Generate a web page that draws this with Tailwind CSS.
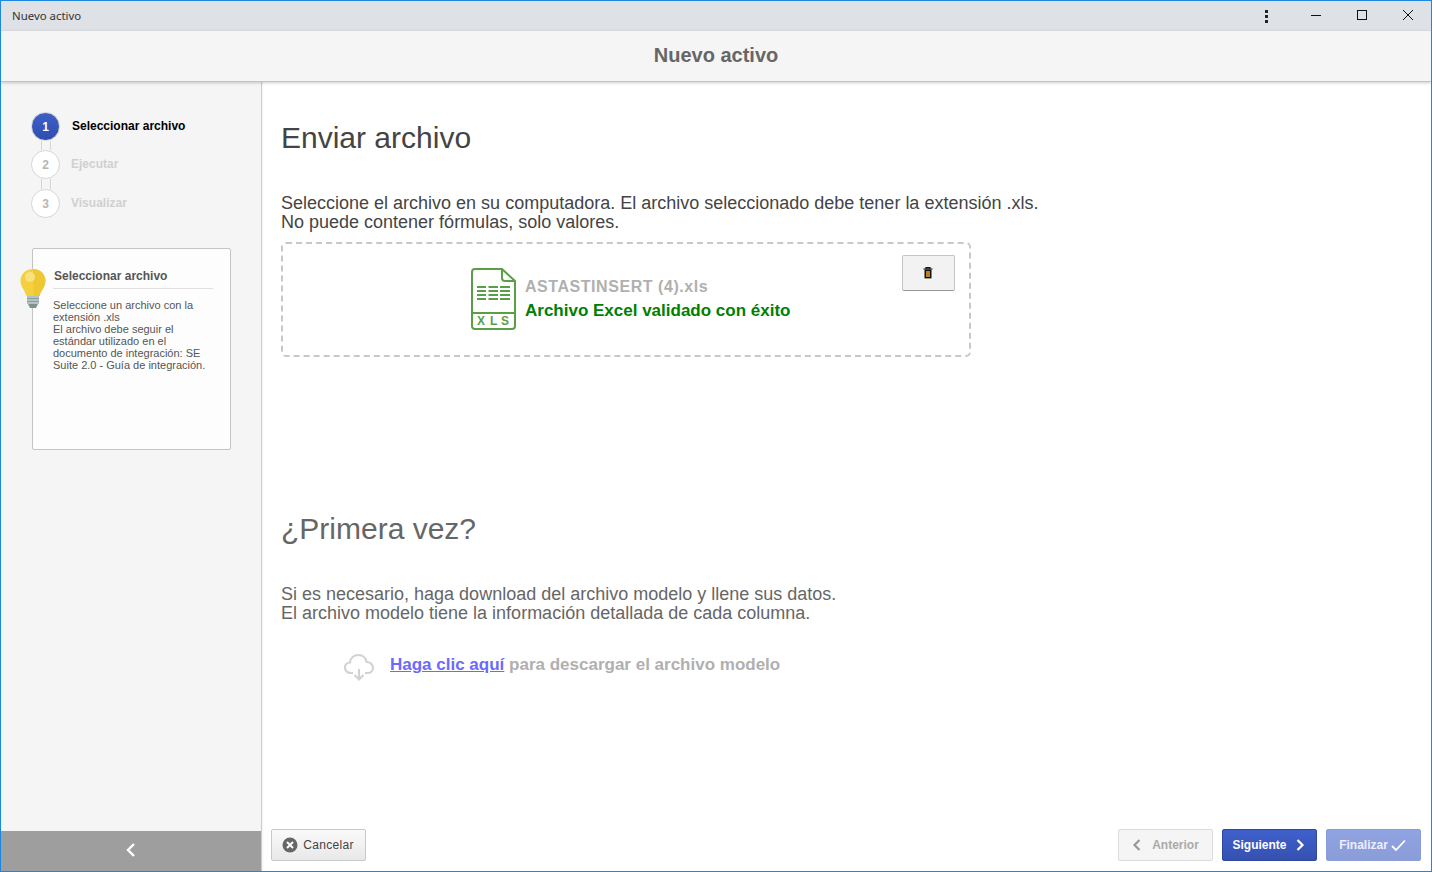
<!DOCTYPE html>
<html>
<head>
<meta charset="utf-8">
<script src="https://cdn.jsdelivr.net/npm/@tailwindcss/browser@4"></script>
</head>
<body class="m-0 overflow-hidden bg-white">
<div class="w-[1432px] h-[872px] border border-[#1b87e0] flex flex-col font-['Liberation_Sans',Arial,sans-serif] overflow-hidden bg-white">
  <div class="h-[30px] shrink-0 bg-[#dee1e5] flex items-center">
    <span class="ml-[11px] text-[11.4px] text-[#333] font-['Noto_Sans',sans-serif] flex-1 pb-[1px]">Nuevo activo</span>
    <svg width="20" height="16" viewBox="0 0 20 16" class="mr-[12px]"><rect x="4" y="2" width="3" height="3" fill="#222"/><rect x="4" y="7" width="3" height="3" fill="#222"/><rect x="4" y="12" width="3" height="3" fill="#222"/></svg>
    <svg width="46" height="16" viewBox="0 0 46 16"><rect x="18" y="7" width="10" height="1" fill="#111"/></svg>
    <svg width="46" height="16" viewBox="0 0 46 16"><rect x="18.5" y="2.5" width="9" height="9" fill="none" stroke="#111"/></svg>
    <svg width="46" height="16" viewBox="0 0 46 16"><path d="M18 2 L28 12 M28 2 L18 12" stroke="#111" stroke-width="1" fill="none"/></svg>
  </div>
  <div class="h-[51px] shrink-0 bg-[#f5f5f5] border-b border-[#c4c4c4] shadow-[0_1px_3px_rgba(0,0,0,0.2)] relative z-10 flex items-center justify-center pb-[2px]">
    <span class="text-[20px] font-bold text-[#666]">Nuevo activo</span>
  </div>
  <div class="flex-1 flex min-h-0">
    <aside class="w-[261px] shrink-0 bg-[#f5f5f5] border-r border-[#ccc] flex flex-col">
      <div class="flex-1 pt-[30px] relative">
        <div class="pl-[30px] flex flex-col">
          <div class="flex items-center h-[29px]">
            <span class="w-[29px] h-[29px] rounded-full bg-gradient-to-b from-[#3f5fc9] to-[#2f4db0] border border-[#d5d5d5] flex items-center justify-center text-white font-bold text-[12px]">1</span>
            <span class="ml-[12px] text-[12px] font-bold text-black pb-[2px]">Seleccionar archivo</span>
          </div>
          <div class="ml-[10px] w-[10px] h-[9px] border-x border-[#d5d5d5]"></div>
          <div class="flex items-center h-[29px]">
            <span class="w-[29px] h-[29px] rounded-full bg-white border border-[#d5d5d5] flex items-center justify-center text-[#b5b5b5] font-bold text-[12px]">2</span>
            <span class="ml-[11px] text-[12px] font-bold text-[#d0d0d0] pb-[2px]">Ejecutar</span>
          </div>
          <div class="ml-[10px] w-[10px] h-[10px] border-x border-[#d5d5d5]"></div>
          <div class="flex items-center h-[29px]">
            <span class="w-[29px] h-[29px] rounded-full bg-white border border-[#d5d5d5] flex items-center justify-center text-[#b5b5b5] font-bold text-[12px]">3</span>
            <span class="ml-[11px] text-[12px] font-bold text-[#d0d0d0] pb-[2px]">Visualizar</span>
          </div>
        </div>
        <div class="ml-[31px] mt-[30px] w-[199px] h-[202px] bg-[#fdfdfd] border border-[#c4c4c4] rounded-[2px] relative pt-[19px] px-[20px]">
          <svg class="absolute left-[-13px] top-[20px]" width="26" height="40" viewBox="0 0 26 40">
            <path d="M13 0 C5.5 0 0.5 5.5 0.5 12 C0.5 18 5 21 6.5 27 L19.5 27 C21 21 25.5 18 25.5 12 C25.5 5.5 20.5 0 13 0Z" fill="#f4d03f"/>
            <path d="M13 0 C20.5 0 25.5 5.5 25.5 12 C25.5 18 21 21 19.5 27 L14 27 Z" fill="#eec832"/>
            <circle cx="10" cy="8" r="5" fill="#f8e27e"/>
            <rect x="7" y="27" width="12" height="8" fill="#b3c3c3"/>
            <rect x="7" y="29" width="12" height="1" fill="#8ea0a0"/>
            <rect x="7" y="32" width="12" height="1" fill="#8ea0a0"/>
            <path d="M8 35 H18 L16 39 H10Z" fill="#7f9292"/>
          </svg>
          <div class="text-[12px] font-bold text-[#555] leading-[16px] pl-[1px] pb-[4px] border-b border-[#e0e0e0] w-[160px]">Seleccionar archivo</div>
          <p class="mt-[10px] text-[11px] leading-[12px] text-[#555] w-[156px]">Seleccione un archivo con la extensión .xls<br>El archivo debe seguir el estándar utilizado en el documento de integración: SE Suite 2.0 - Guía de integración.</p>
        </div>
      </div>
      <div class="h-[40px] shrink-0 bg-[#9e9e9e] flex items-center justify-center pb-[2px]">
        <svg width="12" height="16" viewBox="0 0 12 16"><path d="M9 2 L3 8 L9 14" stroke="#fff" stroke-width="2.4" fill="none"/></svg>
      </div>
    </aside>
    <main class="flex-1 flex flex-col min-w-0 pl-[19px] shadow-[inset_2px_0_2px_-1px_rgba(0,0,0,0.05)]">
      <div class="flex-1">
        <h1 class="mt-[37px] text-[30px] leading-[38px] text-[#444] font-normal">Enviar archivo</h1>
        <p class="mt-[37px] text-[18px] leading-[19px] text-[#444]">Seleccione el archivo en su computadora. El archivo seleccionado debe tener la extensión .xls.<br>No puede contener fórmulas, solo valores.</p>
        <div class="mt-[10px] w-[690px] h-[115px] border-2 border-dashed border-[#c8c8c8] rounded-[5px] relative flex items-start pl-[188px] pt-[24px]">
          <svg width="46" height="62" viewBox="0 0 46 62" class="shrink-0">
            <path d="M4 1 H31 L44 13 V58 Q44 61 41 61 H4 Q1 61 1 58 V4 Q1 1 4 1Z" fill="#fff" stroke="#5a9e47" stroke-width="2"/>
            <path d="M31 1 V10 Q31 13 34 13 H44" fill="none" stroke="#5a9e47" stroke-width="2"/>
            <path d="M1 45 H44" stroke="#5a9e47" stroke-width="2"/>
            <path d="M6 19 H15 M6 23 H15 M6 27 H15 M6 31 H15 M17.500 19 H27 M17.500 23 H27 M17.500 27 H27 M17.500 31 H27 M29 19 H39 M29 23 H39 M29 27 H39 M29 31 H39" stroke="#5a9e47" stroke-width="2"/>
            <text x="6" y="57" font-family="Liberation Sans" font-weight="700" font-size="12" fill="#5a9e47">X</text>
            <text x="19" y="57" font-family="Liberation Sans" font-weight="700" font-size="12" fill="#5a9e47">L</text>
            <text x="30" y="57" font-family="Liberation Sans" font-weight="700" font-size="12" fill="#5a9e47">S</text>
          </svg>
          <div class="ml-[8px] mt-[9px]">
            <div class="text-[16px] leading-[20px] font-bold text-[#b0b0b0] tracking-[0.55px]">ASTASTINSERT (4).xls</div>
            <div class="mt-[4px] text-[17px] leading-[20px] font-bold text-[#008000]">Archivo Excel validado con éxito</div>
          </div>
          <button class="absolute right-[14px] top-[11px] w-[53px] h-[36px] bg-[#f2f2f2] border border-[#c4c4c4] border-b-[#999] rounded-[2px] flex items-center justify-center pr-[2px]">
            <svg width="10" height="12" viewBox="0 0 10 12"><path d="M0.500 2 H9.500 M3 2 V0.600 H7 V2" stroke="#111" stroke-width="1.200" fill="none"/><path d="M1.500 2.500 H8.500 V11.400 H1.500Z" fill="#111"/><path d="M3 4 H7 V10 H3Z" fill="#b5801f"/></svg>
          </button>
        </div>
        <h2 class="mt-[153px] text-[30px] leading-[38px] text-[#666] font-normal">¿Primera vez?</h2>
        <p class="mt-[37px] text-[18px] leading-[19px] text-[#666]">Si es necesario, haga download del archivo modelo y llene sus datos.<br>El archivo modelo tiene la información detallada de cada columna.</p>
        <div class="mt-[25px] ml-[62px] flex items-center h-[34px]">
          <svg width="32" height="32" viewBox="0 0 32 32" class="shrink-0 mt-[4px]">
            <path d="M10 22 H8 C4 22 2 19.500 2 16.500 C2 13.500 4.500 11.500 7 11.500 C7.500 7 11 4 15.500 4 C20 4 23 7 23.500 11 C27 11 30 13.500 30 17 C30 20 27.500 22 24.500 22 H22" fill="none" stroke="#d2d2d2" stroke-width="2.200"/>
            <path d="M16 18 V28 M11.500 24 L16 28.500 L20.500 24" fill="none" stroke="#d2d2d2" stroke-width="2.200"/>
          </svg>
          <span class="ml-[15px] text-[17px] font-bold text-[#b0b0b0]"><a class="text-[#6a6aff] underline">Haga clic aquí</a> para descargar el archivo modelo</span>
        </div>
      </div>
      <div class="h-[40px] shrink-0 flex items-start ml-[-10px] pr-[10px]">
        <button class="w-[95px] h-[32px] mt-[-2px] bg-gradient-to-b from-[#fafafa] to-[#e8e8e8] border border-[#c8c8c8] rounded-[2px] flex items-center justify-center gap-[5px] text-[12px] text-[#444] tracking-[0.3px] pr-[1px]">
          <svg width="16" height="16" viewBox="0 0 16 16"><circle cx="8" cy="8" r="7.500" fill="#666"/><path d="M5 5 L11 11 M11 5 L5 11" stroke="#fff" stroke-width="2"/></svg>
          Cancelar
        </button>
        <div class="flex-1"></div>
        <button class="w-[95px] h-[32px] mt-[-2px] bg-[#f5f5f5] border border-[#dcdcdc] rounded-[2px] flex items-center justify-center gap-[11px] text-[12px] font-bold text-[#aaa]">
          <svg width="9" height="12" viewBox="0 0 9 12"><path d="M7.500 1 L2.500 6 L7.500 11" stroke="#999" stroke-width="2.200" fill="none"/></svg>
          Anterior
        </button>
        <button class="ml-[9px] w-[95px] h-[32px] mt-[-2px] bg-gradient-to-b from-[#3f61cc] to-[#3550b0] border border-[#2f479c] rounded-[2px] flex items-center justify-center gap-[9px] text-[12px] font-bold text-white pr-[2px]">
          Siguiente
          <svg width="9" height="12" viewBox="0 0 9 12"><path d="M1.500 1 L6.500 6 L1.500 11" stroke="#fff" stroke-width="2.200" fill="none"/></svg>
        </button>
        <button class="ml-[9px] w-[95px] h-[32px] mt-[-2px] bg-gradient-to-b from-[#90a3e2] to-[#8a9dd8] border border-[#8a9cd6] rounded-[2px] flex items-center justify-center gap-[3px] text-[12px] font-bold text-[#eef] pr-[2px]">
          Finalizar
          <svg width="15" height="13" viewBox="0 0 15 13"><path d="M1 7 L5 11 L14 1.500" stroke="#fff" stroke-width="1.800" fill="none"/></svg>
        </button>
      </div>
    </main>
  </div>
</div>
</body>
</html>
